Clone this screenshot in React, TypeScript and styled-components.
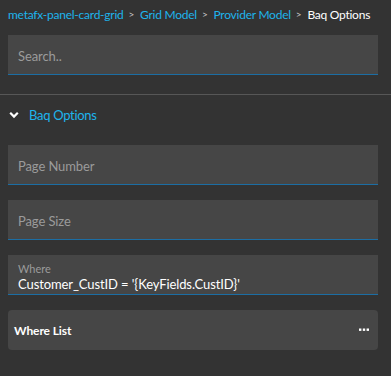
import React from 'react';
import styled, { createGlobalStyle } from 'styled-components';

const GlobalStyle = createGlobalStyle`
  html, body {
    margin: 0;
    padding: 0;
    background: #333333;
  }
  body {
    font-family: Lato, "Open Sans", sans-serif;
  }
`;

const crumbs = ['metafx-panel-card-grid', 'Grid Model', 'Provider Model'];

const App: React.FC = () => {
  return (
    <Page>
      <GlobalStyle />
      <Breadcrumb>
        {crumbs.map((c) => (
          <React.Fragment key={c}>
            <CrumbLink>{c}</CrumbLink>
            <Sep>&gt;</Sep>
          </React.Fragment>
        ))}
        <CrumbCurrent>Baq Options</CrumbCurrent>
      </Breadcrumb>
      <SearchWrap>
        <Field>
          <Placeholder>Search..</Placeholder>
        </Field>
      </SearchWrap>
      <Divider />
      <Section>
        <SectionHeader>
          <Chevron width="10" height="8" viewBox="0 0 10 8">
            <path d="M1.2 1.8 L5 5.6 L8.8 1.8" stroke="#ffffff" strokeWidth="2.2" fill="none" />
          </Chevron>
          <SectionTitle>Baq Options</SectionTitle>
        </SectionHeader>
        <Fields>
          <Field>
            <Placeholder>Page Number</Placeholder>
          </Field>
          <Field>
            <Placeholder>Page Size</Placeholder>
          </Field>
          <Field $stacked>
            <SmallLabel>Where</SmallLabel>
            <Value>Customer_CustID = '{'{'}KeyFields.CustID{'}'}'</Value>
          </Field>
          <ListCard>
            <ListTitle>Where List</ListTitle>
            <Dots width="10" height="4" viewBox="0 0 10 4">
              <rect x="0" y="0.5" width="2.4" height="2.4" fill="#fff" />
              <rect x="3.8" y="0.5" width="2.4" height="2.4" fill="#fff" />
              <rect x="7.6" y="0.5" width="2.4" height="2.4" fill="#fff" />
            </Dots>
          </ListCard>
        </Fields>
      </Section>
    </Page>
  );
};

export default App;

const Page = styled.div`
  width: 391px;
  height: 376px;
  background: #333333;
  overflow: hidden;
`;

const Breadcrumb = styled.div`
  display: flex;
  align-items: center;
  height: 28px;
  padding: 0 8px;
  font-size: 12px;
  letter-spacing: -0.25px;
  white-space: nowrap;
`;

const CrumbLink = styled.span`
  color: #1eb4ec;
`;

const Sep = styled.span`
  color: #c8c8c8;
  font-size: 10px;
  margin: 0 6px 0 5px;
`;

const CrumbCurrent = styled.span`
  color: #ffffff;
`;

const SearchWrap = styled.div`
  padding: 7px 13px 19px 8px;
`;

const Field = styled.div<{ $stacked?: boolean }>`
  height: 40px;
  box-sizing: border-box;
  background: #464646;
  border-bottom: 1px solid #1c6ea4;
  display: flex;
  flex-direction: column;
  justify-content: ${(p) => (p.$stacked ? 'flex-start' : 'center')};
  padding: ${(p) => (p.$stacked ? '7px 10px 0' : '3px 10px 0')};
`;

const Placeholder = styled.span`
  color: #9b9b9b;
  font-size: 13px;
  letter-spacing: -0.1px;
`;

const SmallLabel = styled.span`
  color: #9b9b9b;
  font-size: 11px;
  line-height: 13px;
`;

const Value = styled.span`
  color: #ffffff;
  font-size: 13px;
  letter-spacing: -0.1px;
  line-height: 18px;
`;

const Divider = styled.div`
  height: 1px;
  background: #575757;
`;

const Section = styled.div`
  padding: 0 13px 0 8px;
`;

const SectionHeader = styled.div`
  display: flex;
  align-items: center;
  height: 40px;
  padding-left: 1px;
`;

const Chevron = styled.svg`
  margin-right: 10px;
`;

const SectionTitle = styled.span`
  color: #1eb4ec;
  font-size: 13px;
  letter-spacing: -0.3px;
`;

const Fields = styled.div`
  display: flex;
  flex-direction: column;
  gap: 15px;
  padding-top: 10px;
`;

const ListCard = styled.div`
  height: 40px;
  background: #464646;
  border-radius: 4px;
  display: flex;
  align-items: center;
  justify-content: space-between;
  padding: 0 9px 0 6px;
`;

const ListTitle = styled.span`
  color: #ffffff;
  font-size: 12px;
  font-weight: bold;
  letter-spacing: -0.1px;
`;

const Dots = styled.svg`
  display: block;
`;
